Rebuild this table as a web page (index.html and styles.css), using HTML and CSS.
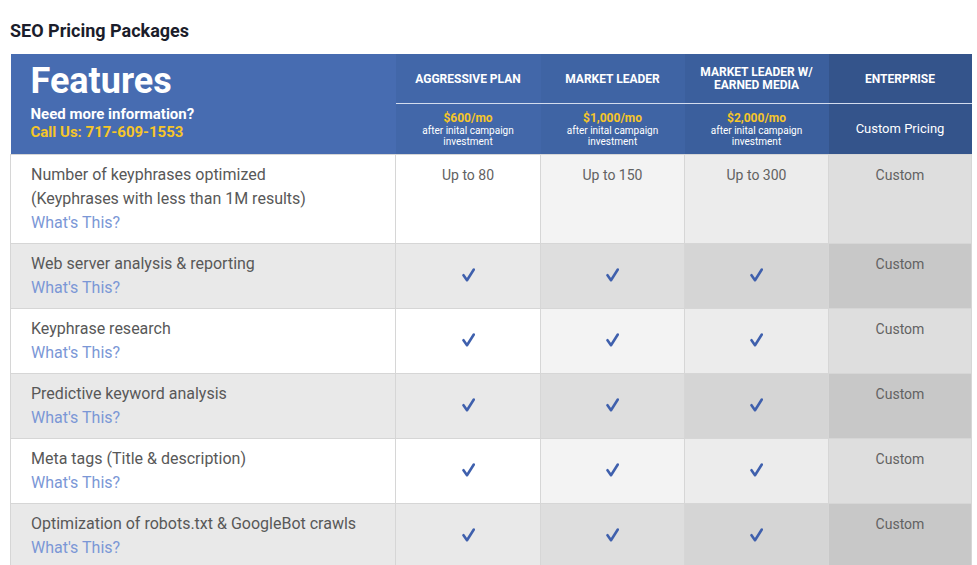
FILE: index.html
```html
<!DOCTYPE html>
<html>
<head>
<meta charset="utf-8">
<link rel="stylesheet" href="styles.css">
</head>
<body>
<div class="page">
  <h1 class="title">SEO Pricing Packages</h1>
  <table class="pricing">
    <colgroup>
      <col class="c-feat"><col class="c-agg"><col class="c-ml"><col class="c-mlem"><col class="c-ent">
    </colgroup>
    <thead>
      <tr class="h-top">
        <th class="feat-head" rowspan="2">
          <div class="feat-title">Features</div>
          <div class="feat-need">Need more information?</div>
          <div class="feat-call">Call Us: 717-609-1553</div>
        </th>
        <th class="h-agg">AGGRESSIVE PLAN</th>
        <th class="h-ml">MARKET LEADER</th>
        <th class="h-mlem">MARKET LEADER W/<br>EARNED MEDIA</th>
        <th class="h-ent">ENTERPRISE</th>
      </tr>
      <tr class="h-bot">
        <th class="h-agg"><span class="price">$600/mo</span><span class="after">after inital campaign<br>investment</span></th>
        <th class="h-ml"><span class="price">$1,000/mo</span><span class="after">after inital campaign<br>investment</span></th>
        <th class="h-mlem"><span class="price">$2,000/mo</span><span class="after">after inital campaign<br>investment</span></th>
        <th class="h-ent ent-price"><span class="custom-pricing">Custom Pricing</span></th>
      </tr>
    </thead>
    <tbody>
      <tr class="odd first">
        <td class="feat">Number of keyphrases optimized<br>(Keyphrases with less than 1M results)<br><a class="what">What's This?</a></td>
        <td class="v agg">Up to 80</td>
        <td class="v ml">Up to 150</td>
        <td class="v mlem">Up to 300</td>
        <td class="v ent">Custom</td>
      </tr>
      <tr class="even">
        <td class="feat">Web server analysis &amp; reporting<br><a class="what">What's This?</a></td>
        <td class="chk agg"><svg class="tick" viewBox="0 0 13 14"><path d="M1.5 7.2 L5 12.2 L11.8 1.5"/></svg></td>
        <td class="chk ml"><svg class="tick" viewBox="0 0 13 14"><path d="M1.5 7.2 L5 12.2 L11.8 1.5"/></svg></td>
        <td class="chk mlem"><svg class="tick" viewBox="0 0 13 14"><path d="M1.5 7.2 L5 12.2 L11.8 1.5"/></svg></td>
        <td class="v ent">Custom</td>
      </tr>
      <tr class="odd">
        <td class="feat">Keyphrase research<br><a class="what">What's This?</a></td>
        <td class="chk agg"><svg class="tick" viewBox="0 0 13 14"><path d="M1.5 7.2 L5 12.2 L11.8 1.5"/></svg></td>
        <td class="chk ml"><svg class="tick" viewBox="0 0 13 14"><path d="M1.5 7.2 L5 12.2 L11.8 1.5"/></svg></td>
        <td class="chk mlem"><svg class="tick" viewBox="0 0 13 14"><path d="M1.5 7.2 L5 12.2 L11.8 1.5"/></svg></td>
        <td class="v ent">Custom</td>
      </tr>
      <tr class="even">
        <td class="feat">Predictive keyword analysis<br><a class="what">What's This?</a></td>
        <td class="chk agg"><svg class="tick" viewBox="0 0 13 14"><path d="M1.5 7.2 L5 12.2 L11.8 1.5"/></svg></td>
        <td class="chk ml"><svg class="tick" viewBox="0 0 13 14"><path d="M1.5 7.2 L5 12.2 L11.8 1.5"/></svg></td>
        <td class="chk mlem"><svg class="tick" viewBox="0 0 13 14"><path d="M1.5 7.2 L5 12.2 L11.8 1.5"/></svg></td>
        <td class="v ent">Custom</td>
      </tr>
      <tr class="odd">
        <td class="feat">Meta tags (Title &amp; description)<br><a class="what">What's This?</a></td>
        <td class="chk agg"><svg class="tick" viewBox="0 0 13 14"><path d="M1.5 7.2 L5 12.2 L11.8 1.5"/></svg></td>
        <td class="chk ml"><svg class="tick" viewBox="0 0 13 14"><path d="M1.5 7.2 L5 12.2 L11.8 1.5"/></svg></td>
        <td class="chk mlem"><svg class="tick" viewBox="0 0 13 14"><path d="M1.5 7.2 L5 12.2 L11.8 1.5"/></svg></td>
        <td class="v ent">Custom</td>
      </tr>
      <tr class="even">
        <td class="feat">Optimization of robots.txt &amp; GoogleBot crawls<br><a class="what">What's This?</a></td>
        <td class="chk agg"><svg class="tick" viewBox="0 0 13 14"><path d="M1.5 7.2 L5 12.2 L11.8 1.5"/></svg></td>
        <td class="chk ml"><svg class="tick" viewBox="0 0 13 14"><path d="M1.5 7.2 L5 12.2 L11.8 1.5"/></svg></td>
        <td class="chk mlem"><svg class="tick" viewBox="0 0 13 14"><path d="M1.5 7.2 L5 12.2 L11.8 1.5"/></svg></td>
        <td class="v ent">Custom</td>
      </tr>
    </tbody>
  </table>
</div>
</body>
</html>
```

FILE: styles.css
```css
html, body {
  margin: 0;
  padding: 0;
  background: #ffffff;
  font-family: Roboto, "Liberation Sans", Arial, sans-serif;
}

.page {
  padding: 20px 0 0 10px;
}

.title {
  margin: 0 0 13px 0;
  font-size: 18px;
  line-height: 21px;
  font-weight: 700;
  color: #1b1d2b;
}

.pricing {
  border-collapse: collapse;
  table-layout: fixed;
  width: 961px;
}

.c-feat { width: 385px; }
.c-agg { width: 145px; }
.c-ml { width: 144px; }
.c-mlem { width: 144px; }
.c-ent { width: 143px; }

.pricing th {
  padding: 0;
  color: #ffffff;
  font-weight: 700;
  text-align: center;
  vertical-align: middle;
}

.h-top th {
  height: 48px;
  font-size: 12px;
  line-height: 13px;
  border-bottom: 1px solid #d3dcee;
  padding-top: 1px;
}

.h-top th.feat-head {
  border-bottom: none;
}

.h-bot th {
  height: 50px;
  font-weight: 400;
}

.h-bot th.ent-price {
  padding-bottom: 4px;
  height: 46px;
}

.feat-head {
  background: #476cb1;
  text-align: left !important;
  vertical-align: top !important;
  padding: 7px 0 0 20px !important;
}

.feat-title {
  font-size: 36px;
  line-height: 40px;
  font-weight: 700;
  color: #ffffff;
}

.feat-need {
  margin-top: 4px;
  font-size: 15px;
  line-height: 18px;
  font-weight: 700;
  color: #ffffff;
}

.feat-call {
  font-size: 15px;
  line-height: 18px;
  font-weight: 700;
  color: #f6c629;
}

.h-agg { background: #4267a9; }
.h-ml { background: #3f64a4; }
.h-mlem { background: #3b5f9d; }
.h-ent { background: #34548b; }

.price {
  display: block;
  font-size: 12px;
  line-height: 13px;
  font-weight: 700;
  color: #f6c629;
}

.after {
  display: block;
  font-size: 10px;
  line-height: 11px;
  color: #ffffff;
}

.custom-pricing {
  font-size: 13px;
  line-height: 16px;
  color: #ffffff;
}

.pricing td {
  border: 1px solid #d6d6d6;
  padding: 0;
  height: 55px;
}

.pricing tr.first td {
  height: 79px;
}

.pricing td.feat {
  padding: 8px 0 0 20px;
  vertical-align: top;
  font-size: 16px;
  line-height: 24px;
  color: #585858;
}

.what {
  color: #7b97d6;
  text-decoration: none;
}

.pricing td.v {
  vertical-align: top;
  text-align: center;
  padding-top: 9px;
  font-size: 14px;
  line-height: 22px;
  color: #626262;
}

.pricing td.chk {
  vertical-align: middle;
  text-align: center;
  padding-bottom: 4px;
}

.tick {
  display: inline-block;
  width: 13px;
  height: 14px;
  vertical-align: middle;
}

.tick path {
  fill: none;
  stroke: #3f60ad;
  stroke-width: 2.6;
  stroke-linecap: round;
  stroke-linejoin: round;
}

tr.odd td.feat, tr.odd td.agg { background: #ffffff; }
tr.odd td.ml { background: #f3f3f3; }
tr.odd td.mlem { background: #ececec; }
tr.odd td.ent { background: #dedede; }

tr.even td.feat, tr.even td.agg { background: #e9e9e9; }
tr.even td.ml { background: #dedede; }
tr.even td.mlem { background: #d5d5d5; }
tr.even td.ent { background: #c8c8c8; }
```
